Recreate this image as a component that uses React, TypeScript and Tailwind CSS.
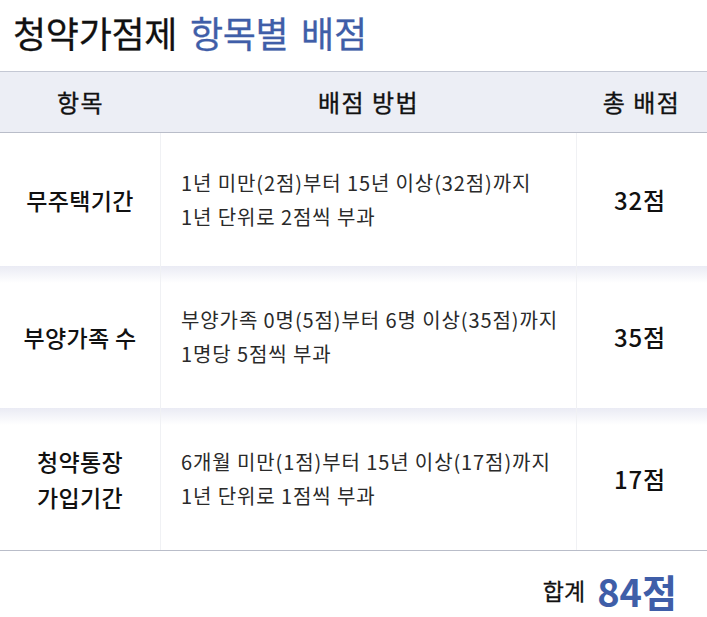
const rows = [
  {
    label: ['무주택기간'],
    lines: ['1년 미만(2점)부터 15년 이상(32점)까지', '1년 단위로 2점씩 부과'],
    score: '32점',
  },
  {
    label: ['부양가족 수'],
    lines: ['부양가족 0명(5점)부터 6명 이상(35점)까지', '1명당 5점씩 부과'],
    score: '35점',
  },
  {
    label: ['청약통장', '가입기간'],
    lines: ['6개월 미만(1점)부터 15년 이상(17점)까지', '1년 단위로 1점씩 부과'],
    score: '17점',
  },
];

export default function App() {
  return (
    <div className="w-[707px] h-[617px] bg-white text-[#111] font-['Noto_Sans_CJK_KR','Noto_Sans',sans-serif]">
      {/* Title */}
      <h1 className="h-[71px] pl-[13px] pt-[3px] text-[36px] font-normal leading-[58px] tracking-[-0.3px] [word-spacing:5px] [-webkit-text-stroke:0.3px]">
        청약가점제 <span className="text-[#3f5ea8]">항목별 배점</span>
      </h1>

      {/* Table */}
      <div className="border-t border-[#c4c8d4]">
        <div className="flex h-[61px] items-center bg-[#eceef5] border-b border-[#b9bdc9] text-[24px] font-normal [-webkit-text-stroke:0.35px]">
          <div className="w-[161px] text-center tracking-[1.5px]">항목</div>
          <div className="flex-1 text-center tracking-[1.5px]">배점 방법</div>
          <div className="w-[131px] text-center tracking-[1.5px]">총 배점</div>
        </div>

        {rows.map((row, i) => (
          <div
            key={i}
            className={`flex ${i === 0 ? 'h-[133px]' : 'h-[142px] bg-gradient-to-b from-[#eaebf4] via-white via-[12%] to-white'}`}
          >
            <div className="w-[161px] flex flex-col items-center justify-center text-[23px] font-medium leading-[36px] tracking-[0.3px] border-r border-[#f0f1f4]">
              {row.label.map((l) => (
                <div key={l}>{l}</div>
              ))}
            </div>
            <div className="flex-1 flex flex-col justify-center pl-[20px] text-[20px] leading-[34px] text-[#2a2a2a] tracking-[0.9px] border-r border-[#f0f1f4]">
              {row.lines.map((l) => (
                <div key={l}>{l}</div>
              ))}
            </div>
            <div className="w-[130px] flex items-center justify-center pr-[4px] text-[24px] font-medium tracking-[0.8px]">
              {row.score}
            </div>
          </div>
        ))}
      </div>

      {/* Total */}
      <div className="border-t border-[#b9bdc9] flex items-center justify-end pr-[30px] h-[80px] gap-[12px]">
        <span className="text-[23px] font-normal [-webkit-text-stroke:0.3px]">합계</span>
        <span className="text-[38px] font-bold text-[#3f5ea8]">84점</span>
      </div>
    </div>
  );
}
